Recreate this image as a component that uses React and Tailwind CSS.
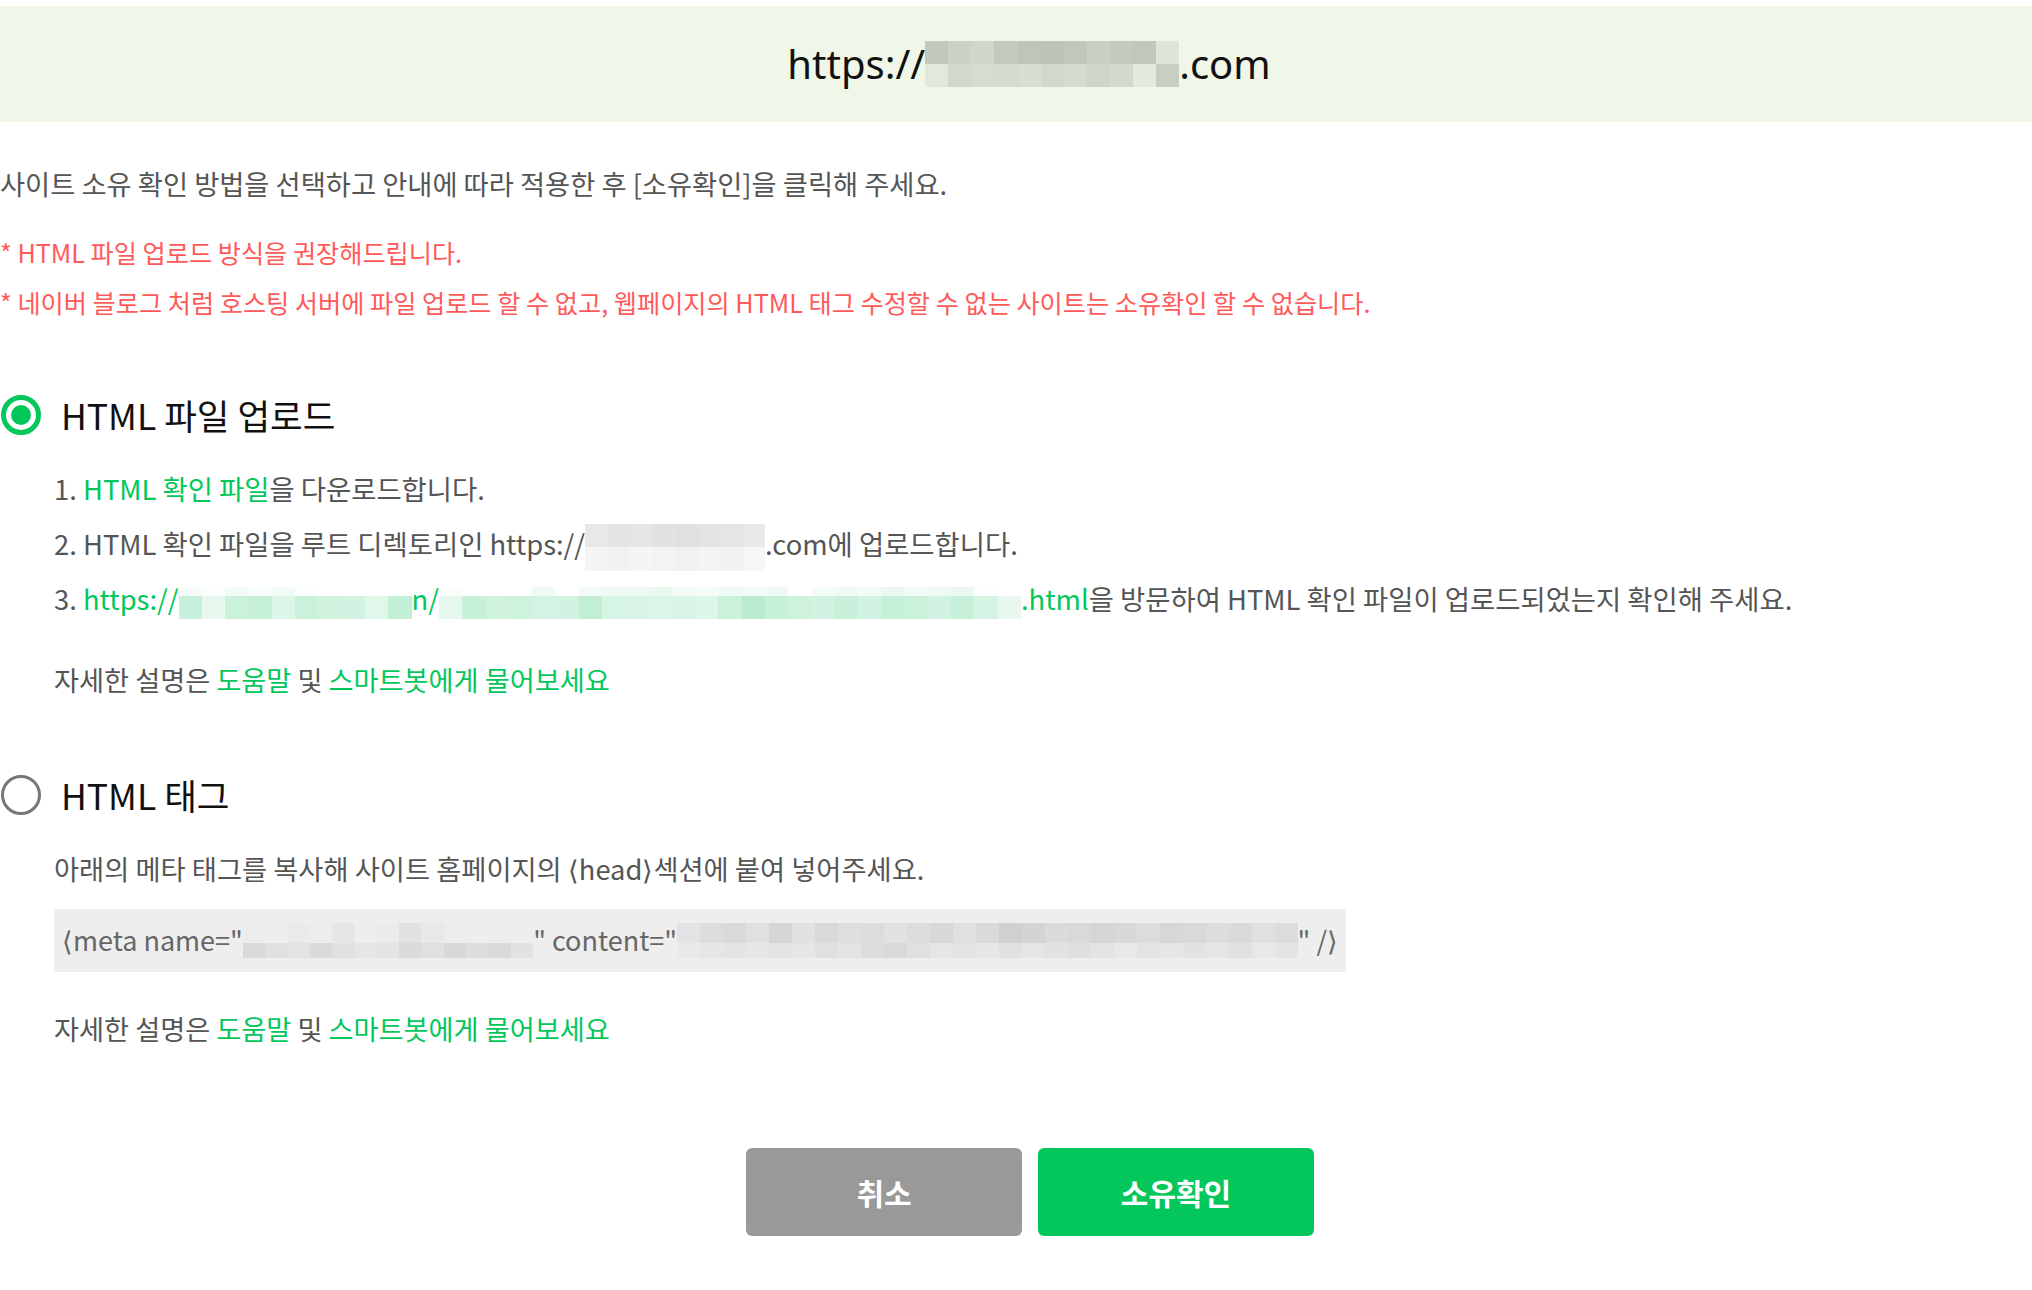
const green = 'text-[#03c75a]';

// pixelated (blurred) placeholder for masked text
function Mosaic({ rows, className = '' }) {
  return (
    <span className={`inline-flex flex-col align-middle ${className}`}>
      {rows.map((row, i) => (
        <span key={i} className="flex">
          {row.colors.map((c, j) => (
            <span key={j} className={`block flex-1 ${row.cls}`} style={{ backgroundColor: c }} />
          ))}
        </span>
      ))}
    </span>
  );
}

const headerBlur = [
  {
    cls: 'h-[23px]',
    colors: ['#c3c8bc', '#cdd2c6', '#d2d7cb', '#c4c9bd', '#c0c5b9', '#bec3b7', '#c2c7bb', '#cacfc3', '#c5cabe', '#c2c7bb', '#dfe5d8'],
  },
  {
    cls: 'h-[23px]',
    colors: ['#e2e8dc', '#d3d8cc', '#d7dcd0', '#d6dbcf', '#d9ded2', '#d3d8cc', '#d6dbcf', '#d0d5c9', '#d4d9cd', '#e3e9dc', '#c9cec2'],
  },
];

const step2Blur = [
  { cls: 'h-[23px]', colors: ['#e8e8e8', '#e4e4e4', '#e6e6e6', '#e2e2e2', '#e0e0e0', '#e3e3e3', '#e5e5e5', '#e9e9e9'] },
  { cls: 'h-[24px]', colors: ['#f4f4f4', '#f2f2f2', '#f5f5f5', '#f3f3f3', '#f1f1f1', '#f4f4f4', '#f2f2f2', '#f6f6f6'] },
];

const step3BlurA = [
  { cls: 'h-[9px]', colors: ['#f6fcf8', '#fbfefc', '#f3fbf6', '#f7fdf9', '#f2fbf6', '#fbfefc', '#ffffff', '#ffffff', '#ffffff', '#ffffff'] },
  { cls: 'h-[23px]', colors: ['#c6f0d9', '#e8f8ef', '#c9f1db', '#c5efd8', '#dcf6e8', '#c9f1dc', '#d0f3e0', '#d2f3e2', '#e0f7ea', '#c3efd7'] },
];

const step3BlurB = [
  {
    cls: 'h-[9px]',
    colors: ['#fafefb', '#ffffff', '#ffffff', '#ffffff', '#f0faf4', '#ffffff', '#f2fbf6', '#eefaf3', '#f0faf4', '#eaf8f0', '#f3fbf6', '#f5fcf8', '#f0faf4', '#f2fbf6', '#eefaf3', '#ffffff', '#f4fcf7', '#f0faf4', '#f2fbf6', '#eaf8f0', '#f3fbf6', '#f0faf4', '#eaf8f0', '#fbfefc', '#ffffff'],
  },
  {
    cls: 'h-[23px]',
    colors: ['#e6f8ee', '#c6f0d9', '#d0f3e0', '#cdf2de', '#d4f4e3', '#d2f3e2', '#c2eed6', '#d6f5e5', '#d9f5e6', '#dbf6e8', '#d8f5e6', '#dcf6e8', '#c9f1dc', '#b9ecd0', '#c6f0d9', '#cff2df', '#d3f3e2', '#c8f0da', '#d1f3e1', '#c4efd8', '#cbf1dc', '#d2f3e2', '#c6f0d9', '#d5f4e4', '#e8f8ef'],
  },
];

const metaNameBlur = [
  { cls: 'h-[20px]', colors: ['#ececec', '#eeeeee', '#eaeaea', '#ededed', '#e6e6e6', '#eeeeee', '#ebebeb', '#e2e2e2', '#e8e8e8', '#ececec', '#eeeeee', '#ededed', '#eeeeee'] },
  { cls: 'h-[15px]', colors: ['#d9d9d9', '#e0e0e0', '#e3e3e3', '#dadada', '#e1e1e1', '#e6e6e6', '#e4e4e4', '#dbdbdb', '#e0e0e0', '#d8d8d8', '#dddddd', '#dadada', '#e2e2e2'] },
];

const metaContentBlur = [
  {
    cls: 'h-[20px]',
    colors: ['#e3e3e3', '#dddddd', '#dadada', '#e0e0e0', '#d6d6d6', '#e1e1e1', '#d9d9d9', '#dfdfdf', '#dcdcdc', '#e2e2e2', '#dddddd', '#d8d8d8', '#e0e0e0', '#dadada', '#d0d0d0', '#d4d4d4', '#dbdbdb', '#d9d9d9', '#d5d5d5', '#d8d8d8', '#dcdcdc', '#d7d7d7', '#d9d9d9', '#dddddd', '#dadada', '#e0e0e0', '#dcdcdc'],
  },
  {
    cls: 'h-[15px]',
    colors: ['#e9e9e9', '#e6e6e6', '#e4e4e4', '#e7e7e7', '#e3e3e3', '#e6e6e6', '#e0e0e0', '#e4e4e4', '#dddddd', '#d9d9d9', '#e0e0e0', '#e6e6e6', '#e3e3e3', '#e7e7e7', '#e1e1e1', '#e5e5e5', '#e2e2e2', '#dfdfdf', '#e4e4e4', '#e8e8e8', '#e3e3e3', '#e6e6e6', '#e2e2e2', '#e5e5e5', '#e1e1e1', '#e8e8e8', '#e4e4e4'],
  },
];

function Radio({ checked }) {
  if (checked) {
    return (
      <span className="flex h-[40px] w-[40px] shrink-0 items-center justify-center rounded-full border-[5px] border-[#03c75a]">
        <span className="block h-[20px] w-[20px] rounded-full bg-[#03c75a]" />
      </span>
    );
  }
  return <span className="block h-[40px] w-[40px] shrink-0 rounded-full border-[3px] border-[#777]" />;
}

function HelpLine({ className = '' }) {
  return (
    <p className={`whitespace-nowrap pl-[54px] text-[27.2px] leading-[36px] ${className}`}>
      자세한 설명은 <span className={green}>도움말</span> 및 <span className={green}>스마트봇에게 물어보세요</span>
    </p>
  );
}

export default function App() {
  return (
    <div className="min-h-screen overflow-hidden bg-white pt-[6px] font-['Noto_Sans_CJK_KR','Noto_Sans',sans-serif] text-[#555]">
      <div className="flex h-[116px] items-center justify-center bg-[#f0f7e9] pl-[26px] font-['Noto_Sans','Noto_Sans_CJK_KR',sans-serif] text-[40px] text-[#111]">
        <span>https://</span>
        <Mosaic rows={headerBlur} className="w-[254px]" />
        <span>.com</span>
      </div>

      <p className="mt-[43px] whitespace-nowrap text-[27.3px] leading-[36px]">
        사이트 소유 확인 방법을 선택하고 안내에 따라 적용한 후 [소유확인]을 클릭해 주세요.
      </p>

      <div className="mt-[26px] whitespace-nowrap text-[25.2px] leading-[50px] text-[#ff5a5a]">
        <p>* HTML 파일 업로드 방식을 권장해드립니다.</p>
        <p>* 네이버 블로그 처럼 호스팅 서버에 파일 업로드 할 수 없고, 웹페이지의 HTML 태그 수정할 수 없는 사이트는 소유확인 할 수 없습니다.</p>
      </div>

      <div className="mt-[66px] flex h-[44px] items-center gap-[20px] pl-[1px]">
        <Radio checked />
        <span className="text-[35.5px] text-[#111]">HTML 파일 업로드</span>
      </div>

      <ol className="mt-[24px] whitespace-nowrap pl-[54px] text-[27.4px] leading-[55px]">
        <li>
          1. <span className={green}>HTML 확인 파일</span>을 다운로드합니다.
        </li>
        <li>
          2. HTML 확인 파일을 루트 디렉토리인 https://
          <Mosaic rows={step2Blur} className="w-[180px]" />
          .com에 업로드합니다.
        </li>
        <li>
          3. <span className={green}>https://</span>
          <Mosaic rows={step3BlurA} className="w-[233px]" />
          <span className={green}>n/</span>
          <Mosaic rows={step3BlurB} className="w-[582px]" />
          <span className={green}>.html</span>을 방문하여 HTML 확인 파일이 업로드되었는지 확인해 주세요.
        </li>
      </ol>

      <HelpLine className="mt-[35px]" />

      <div className="mt-[76px] flex h-[44px] items-center gap-[20px] pl-[1px]">
        <Radio />
        <span className="text-[35.5px] text-[#111]">HTML 태그</span>
      </div>

      <p className="mt-[33px] whitespace-nowrap pl-[54px] text-[27.3px] leading-[36px]">
        아래의 메타 태그를 복사해 사이트 홈페이지의 ⟨head⟩섹션에 붙여 넣어주세요.
      </p>

      <div className="ml-[54px] mt-[23px] flex h-[63px] w-[1292px] items-center whitespace-nowrap bg-[#eeeeee] px-[8px] text-[27px] text-[#666]">
        <span>⟨meta name="</span>
        <Mosaic rows={metaNameBlur} className="w-[291px]" />
        <span>" content="</span>
        <Mosaic rows={metaContentBlur} className="w-[622px]" />
        <span>" /⟩</span>
      </div>

      <HelpLine className="mt-[38px]" />

      <div className="mt-[102px] flex justify-center gap-[16px] pl-[28px] pb-[52px]">
        <button type="button" className="h-[88px] w-[276px] rounded-[6px] bg-[#999999] text-[30px] font-bold text-white">
          취소
        </button>
        <button type="button" className="h-[88px] w-[276px] rounded-[6px] bg-[#03c75a] text-[30px] font-bold text-white">
          소유확인
        </button>
      </div>
    </div>
  );
}
